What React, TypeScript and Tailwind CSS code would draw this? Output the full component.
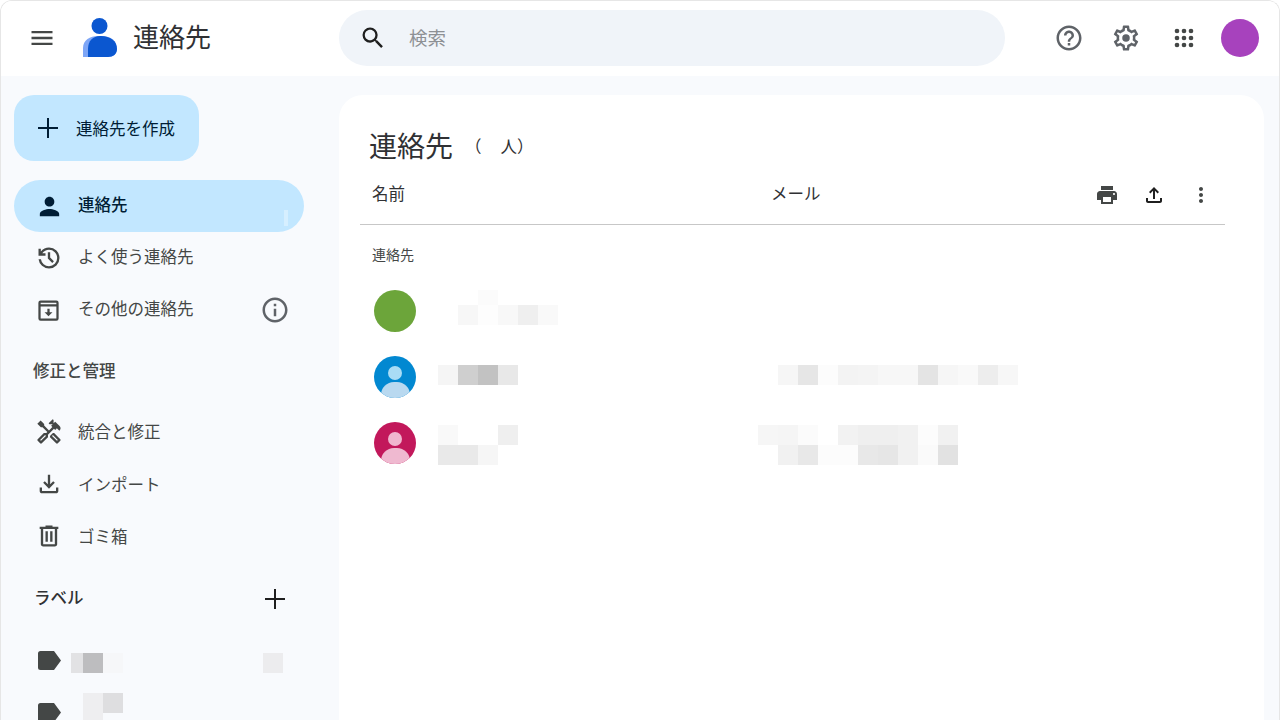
import {
  MdHelpOutline,
  MdMenu,
  MdMoreVert,
  MdOutlineFileDownload,
  MdOutlineFileUpload,
  MdOutlineHandyman,
  MdOutlineInfo,
  MdPerson,
  MdPrint,
  MdSearch,
} from 'react-icons/md';

const font = { fontFamily: '"Noto Sans CJK JP", "Noto Sans", sans-serif' };

// Blurred-out names and addresses, one class per 20px cell ('' = empty)
type Mosaic = { height: string; cells: string[] }[];

const MosaicBlock = ({ rows }: { rows: Mosaic }) => (
  <div className="flex flex-col">
    {rows.map((row, i) => (
      <div key={i} className="flex">
        {row.cells.map((cell, j) => (
          <div key={j} className={`w-5 ${row.height} ${cell}`} />
        ))}
      </div>
    ))}
  </div>
);

const GoogleGear = ({ className }: { className?: string }) => (
  <svg viewBox="0 0 24 24" className={className} fill="currentColor">
    <path d="M19.43 12.98c.04-.32.07-.64.07-.98 0-.34-.03-.66-.07-.98l2.11-1.65c.19-.15.24-.42.12-.64l-2-3.46c-.09-.16-.26-.25-.44-.25-.06 0-.12.01-.17.03l-2.49 1c-.52-.4-1.08-.73-1.69-.98l-.38-2.65C14.46 2.18 14.25 2 14 2h-4c-.25 0-.46.18-.49.42l-.38 2.65c-.61.25-1.17.59-1.69.98l-2.49-1c-.06-.02-.12-.03-.18-.03-.17 0-.34.09-.43.25l-2 3.46c-.13.22-.07.49.12.64l2.11 1.65c-.04.32-.07.65-.07.98 0 .33.03.66.07.98l-2.11 1.65c-.19.15-.24.42-.12.64l2 3.46c.09.16.26.25.44.25.06 0 .12-.01.17-.03l2.49-1c.52.4 1.08.73 1.69.98l.38 2.65c.03.24.24.42.49.42h4c.25 0 .46-.18.49-.42l.38-2.65c.61-.25 1.17-.59 1.69-.98l2.49 1c.06.02.12.03.18.03.17 0 .34-.09.43-.25l2-3.46c.12-.22.07-.49-.12-.64l-2.11-1.65zm-1.98-1.71c.04.31.05.52.05.73 0 .21-.02.43-.05.73l-.14 1.13.89.7 1.08.84-.7 1.21-1.27-.51-1.04-.42-.9.68c-.43.32-.84.56-1.25.73l-1.06.43-.16 1.13-.2 1.35h-1.4l-.19-1.35-.16-1.13-1.06-.43c-.43-.18-.83-.41-1.23-.71l-.91-.7-1.06.43-1.27.51-.7-1.21 1.08-.84.89-.7-.14-1.13c-.03-.31-.05-.54-.05-.74s.02-.43.05-.73l.14-1.13-.89-.7-1.08-.84.7-1.21 1.27.51 1.04.42.9-.68c.43-.32.84-.56 1.25-.73l1.06-.43.16-1.13.2-1.35h1.39l.19 1.35.16 1.13 1.06.43c.43.18.83.41 1.23.71l.91.7 1.06-.43 1.27-.51.7 1.21-1.07.85-.89.7.14 1.13z" />
    <circle cx="12" cy="12" r="3" />
  </svg>
);

const AppsDots = ({ className }: { className?: string }) => (
  <svg viewBox="0 0 24 24" className={className} fill="currentColor">
    {[6, 12, 18].map((y) =>
      [6, 12, 18].map((x) => <circle key={`${x}-${y}`} cx={x} cy={y} r="2" />)
    )}
  </svg>
);

const HistoryIcon = ({ className }: { className?: string }) => (
  <svg viewBox="0 0 24 24" className={className} fill="currentColor">
    <path d="M12 21q-3.45 0-6.012-2.288T3.05 13H5.1q.35 2.6 2.313 4.3T12 19q2.925 0 4.963-2.037T19 12q0-2.925-2.037-4.963T12 5q-1.725 0-3.225.8T6.25 8H9v2H3V4h2v2.35q1.275-1.6 3.113-2.475T12 3q3.75 0 6.375 2.625T21 12q0 3.75-2.625 6.375T12 21Zm2.8-4.8L11 12.4V7h2v4.6l3.2 3.2-1.4 1.4Z" />
  </svg>
);

const OtherContactsIcon = ({ className }: { className?: string }) => (
  <svg viewBox="0 0 24 24" className={className} fill="currentColor">
    <path d="M5 3h14a2 2 0 0 1 2 2v14a2 2 0 0 1-2 2H5a2 2 0 0 1-2-2V5a2 2 0 0 1 2-2Zm0 5.5V19h14V8.5H5ZM5 5v1.5h14V5H5Z" fillRule="evenodd" />
    <path d="M11 10.5h2v3h2.5L12 17.2l-3.5-3.7H11z" />
  </svg>
);

const TrashIcon = ({ className }: { className?: string }) => (
  <svg viewBox="0 0 24 24" className={className} fill="currentColor">
    <path d="M7 21q-.825 0-1.412-.587Q5 19.825 5 19V6H4V4h5V3h6v1h5v2h-1v13q0 .825-.587 1.413Q17.825 21 17 21ZM17 6H7v13h10ZM9 17h2V8H9Zm4 0h2V8h-2ZM7 6v13Z" />
  </svg>
);

const LabelIcon = ({ className }: { className?: string }) => (
  <svg viewBox="0 0 23 19" className={className} fill="currentColor">
    <path d="M2.5 0H16l7 9.5-7 9.5H2.5A2.5 2.5 0 0 1 0 16.5v-14A2.5 2.5 0 0 1 2.5 0Z" />
  </svg>
);

const ThinPlus = ({ className }: { className?: string }) => (
  <svg viewBox="0 0 20 20" className={className} fill="currentColor">
    <path d="M9 0h2v9h9v2h-9v9H9v-9H0V9h9z" />
  </svg>
);

const ContactsLogo = () => (
  <svg viewBox="0 0 34 39" className="w-[34px] h-[39px]">
    <path d="M0 39V30C0 22 7 18 15 18h4c9 0 15 5 15 13v0c0 5-4 8-9 8Z" fill="#7ea6f6" />
    <path d="M5 39V31c0-8 5-13 12-13h1c9 0 16 5 16 13v0c0 5-4 8-9 8Z" fill="#0b57d0" />
    <circle cx="16.5" cy="8" r="8" fill="#0b57d0" />
  </svg>
);

const PersonAvatar = ({ bg, head, body }: { bg: string; head: string; body: string }) => (
  <div className={`w-[42px] h-[42px] rounded-full overflow-hidden flex flex-col items-center ${bg}`}>
    <div className={`w-[14px] h-[14px] shrink-0 rounded-full mt-[10px] ${head}`} />
    <div className={`w-[29px] h-[26px] shrink-0 rounded-full mt-[2px] ${body}`} />
  </div>
);

const NavRow = ({
  icon,
  label,
  textClass,
  children,
}: {
  icon: React.ReactNode;
  label: string;
  textClass?: string;
  children?: React.ReactNode;
}) => (
  <div className="h-[52px] ml-[14px] w-[290px] flex items-center text-[#444746]">
    <div className="w-[64px] pl-[21px] shrink-0">{icon}</div>
    <span className={`text-[16.5px] flex-1 ${textClass ?? ''}`}>{label}</span>
    {children}
  </div>
);

export default function App() {
  return (
    <div className="w-[1280px] h-[720px] overflow-hidden bg-white" style={font}>
      <div className="h-full flex flex-col rounded-t-xl border-t border-x border-[#e6e6e6] overflow-hidden">
        {/* Top bar */}
        <header className="h-[76px] shrink-0 bg-white flex items-center -mt-px">
          <MdMenu className="w-7 h-7 ml-[27px] text-[#444746]" />
          <div className="ml-[27px] mb-[2px]">
            <ContactsLogo />
          </div>
          <span className="ml-4 mb-[5px] text-[26px] text-[#303134]">連絡先</span>
          <div className="ml-[128px] w-[666px] h-14 rounded-full bg-[#f0f4f9] flex items-center">
            <MdSearch className="w-7 h-7 ml-5 text-[#1f1f1f]" />
            <span className="ml-[22px] text-[18.5px] text-[#8d9094]">検索</span>
          </div>
          <MdHelpOutline className="ml-[49px] w-[30px] h-[30px] text-[#5f6368]" />
          <GoogleGear className="ml-[27px] w-[30px] h-[30px] text-[#5f6368]" />
          <AppsDots className="ml-[29px] w-7 h-7 text-[#444746]" />
          <div className="ml-[23px] w-[38px] h-[38px] rounded-full bg-[#a742bd]" />
        </header>

        <div className="flex-1 flex bg-[#f8fafd] min-h-0">
          {/* Sidebar */}
          <aside className="w-[338px] shrink-0 pt-[19px]">
            <div className="ml-[13px] w-[185px] h-[66px] rounded-[20px] bg-[#c2e7ff] flex items-center text-[#001d35]">
              <ThinPlus className="ml-[24px] w-5 h-5" />
              <span className="ml-[18px] text-[16.5px]">連絡先を作成</span>
            </div>

            <div className="relative mt-[19px] ml-[13px] w-[290px] h-[52px] rounded-full bg-[#c2e7ff] flex items-center text-[#001d35]">
              <MdPerson className="ml-[21px] w-[29px] h-[29px]" />
              <span className="ml-[14px] pb-[3px] text-[16.5px] font-medium">連絡先</span>
              <div className="absolute left-[270px] top-[30px] w-1 h-4 bg-[#d6efff]" />
            </div>

            <div className="-ml-px">
              <NavRow icon={<HistoryIcon className="w-7 h-7" />} label="よく使う連絡先" textClass="pb-[3px]" />
              <NavRow icon={<OtherContactsIcon className="w-[27px] h-[27px]" />} label="その他の連絡先" textClass="pb-[3px]">
                <MdOutlineInfo className="w-[30px] h-[30px] mr-[14px] text-[#5f6368]" />
              </NavRow>
            </div>

            <div className="mt-[22px] ml-[32px] text-[16.5px] leading-6 font-medium text-[#444746]">修正と管理</div>

            <div className="mt-[24px] -ml-px">
              <NavRow icon={<MdOutlineHandyman className="w-7 h-7" />} label="統合と修正" textClass="pb-[2px]" />
              <NavRow icon={<MdOutlineFileDownload className="w-7 h-7" />} label="インポート" />
              <NavRow icon={<TrashIcon className="w-7 h-7" />} label="ゴミ箱" />
            </div>

            <div className="mt-[23px] ml-[33px] w-[251px] h-6 flex items-center justify-between text-[#1f1f1f]">
              <span className="text-[16.5px] font-medium text-[#303134]">ラベル</span>
              <ThinPlus className="w-5 h-5 mt-[3px]" />
            </div>

            <div className="mt-[39px] ml-[37px] flex items-start h-[52px] text-[#444746]">
              <LabelIcon className="w-[23px] h-[19px] mt-[3px] shrink-0" />
              <div className="ml-[10px] mt-[5px] flex">
                <div className="w-3 h-5 bg-[#e2e2e4]" />
                <div className="w-5 h-5 bg-[#bdbdbf]" />
                <div className="w-5 h-5 bg-[#f6f7f9]" />
              </div>
              <div className="ml-[140px] mt-[5px] w-5 h-5 bg-[#ececee]" />
            </div>
            <div className="ml-[37px] flex items-start text-[#444746]">
              <LabelIcon className="w-[23px] h-[19px] mt-[3px] shrink-0" />
              <div className="ml-[22px] -mt-[7px] flex">
                <div className="w-5 h-10 bg-[#eeeef0]" />
                <div className="w-5 h-5 bg-[#dedee0]" />
              </div>
            </div>
          </aside>

          {/* Contact list */}
          <main className="w-[925px] mt-[19px] bg-white rounded-t-[24px] pl-[21px] text-[#303134]">
            <div className="pt-[29px] pl-[9px] flex items-center h-[70px]">
              <span className="text-[28px] leading-none">連絡先</span>
              <span className="ml-[12px] mt-[4px] text-[16.5px] flex items-center">
                （<span className="w-[19px]" />人）
              </span>
            </div>
            <div className="w-[865px] h-[60px] border-b border-[#c7c7c7] flex pt-[16px] items-start">
              <span className="ml-[12px] w-[399px] text-[16.5px] leading-6">名前</span>
              <span className="text-[16.5px] leading-6">メール</span>
              <MdPrint className="ml-[274px] mt-[2px] w-6 h-6 text-[#444746]" />
              <MdOutlineFileUpload className="ml-[23px] mt-[2px] w-6 h-6 text-[#1f1f1f]" />
              <MdMoreVert className="ml-[23px] mt-[2px] w-6 h-6 text-[#444746]" />
            </div>

            <div className="pl-[12px] pt-[19px] text-[14px] leading-5 text-[#444746]">連絡先</div>

            <div className="pl-[14px] mt-[14px]">
              <div className="h-[66px] flex items-start">
                <div className="w-[42px] h-[42px] rounded-full bg-[#6ca53a] mt-[12px]" />
                <div className="ml-[22px] mt-[12px]">
                  <MosaicBlock
                    rows={[
                      { height: 'h-[15px]', cells: ['', '', 'bg-[#fbfbfb]'] },
                      {
                        height: 'h-5',
                        cells: ['', 'bg-[#f7f7f7]', 'bg-[#fdfdfd]', 'bg-[#f8f8f8]', 'bg-[#efefef]', 'bg-[#f9f9f9]'],
                      },
                    ]}
                  />
                </div>
              </div>
              <div className="h-[66px] flex items-start">
                <div className="mt-[12px]">
                  <PersonAvatar bg="bg-[#0288d1]" head="bg-[#a9dcf5]" body="bg-[#b9d9f0]" />
                </div>
                <div className="ml-[22px] mt-[21px] w-[340px]">
                  <MosaicBlock
                    rows={[{ height: 'h-5', cells: ['bg-[#f5f5f5]', 'bg-[#cfcfcf]', 'bg-[#c2c2c2]', 'bg-[#e8e8e8]'] }]}
                  />
                </div>
                <div className="mt-[21px]">
                  <MosaicBlock
                    rows={[
                      {
                        height: 'h-5',
                        cells: [
                          'bg-[#f6f6f6]',
                          'bg-[#e6e6e6]',
                          'bg-[#fcfcfc]',
                          'bg-[#f3f3f3]',
                          'bg-[#f4f4f4]',
                          'bg-[#f7f7f7]',
                          'bg-[#f7f7f7]',
                          'bg-[#e4e4e4]',
                          'bg-[#f6f6f6]',
                          'bg-[#f9f9f9]',
                          'bg-[#ededed]',
                          'bg-[#f7f7f7]',
                        ],
                      },
                    ]}
                  />
                </div>
              </div>
              <div className="h-[66px] flex items-start">
                <div className="mt-[12px]">
                  <PersonAvatar bg="bg-[#c2185b]" head="bg-[#f0b6cf]" body="bg-[#efb9d0]" />
                </div>
                <div className="ml-[22px] mt-[15px] w-[320px]">
                  <MosaicBlock
                    rows={[
                      { height: 'h-5', cells: ['bg-[#f9f9f9]', '', '', 'bg-[#efefef]'] },
                      { height: 'h-5', cells: ['bg-[#e9e9e9]', 'bg-[#e9e9e9]', 'bg-[#f6f6f6]'] },
                    ]}
                  />
                </div>
                <div className="mt-[15px]">
                  <MosaicBlock
                    rows={[
                      {
                        height: 'h-5',
                        cells: [
                          'bg-[#f6f6f6]',
                          'bg-[#f5f5f5]',
                          'bg-[#fbfbfb]',
                          '',
                          'bg-[#f2f2f2]',
                          'bg-[#efefef]',
                          'bg-[#efefef]',
                          'bg-[#f1f1f1]',
                          'bg-[#fcfcfc]',
                          'bg-[#f1f1f1]',
                        ],
                      },
                      {
                        height: 'h-5',
                        cells: [
                          '',
                          'bg-[#f1f1f1]',
                          'bg-[#e8e8e8]',
                          'bg-[#fcfcfc]',
                          'bg-[#fcfcfc]',
                          'bg-[#e8e8e8]',
                          'bg-[#e6e6e6]',
                          'bg-[#f1f1f1]',
                          'bg-[#fafafa]',
                          'bg-[#e2e2e2]',
                        ],
                      },
                    ]}
                  />
                </div>
              </div>
            </div>
          </main>
        </div>
      </div>
    </div>
  );
}
